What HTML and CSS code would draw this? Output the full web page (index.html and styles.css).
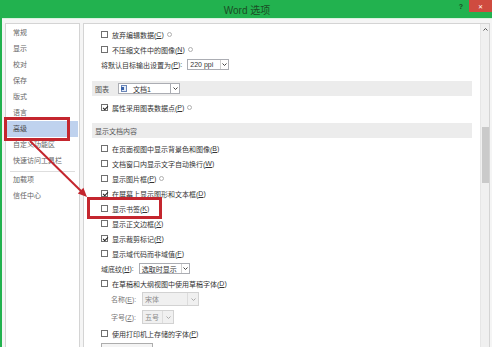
FILE: index.html
```html
<!DOCTYPE html>
<html lang="zh-CN">

<head>
  <meta charset="UTF-8" />
  <title>Word 选项</title>
  <link rel="stylesheet" href="styles.css">
</head>

<body>
  <div class="dialog">
    <div class="titlebar">
      <span></span>
      <span class="title">Word 选项</span>
      <div class="controls">
        <span class="help">?</span>
        <span class="close">✕</span>
      </div>
    </div>

    <div class="main">
      <ul class="nav">
        <li>常规</li>
        <li>显示</li>
        <li>校对</li>
        <li>保存</li>
        <li>版式</li>
        <li>语言</li>
        <li class="active">高级</li>
        <li>自定义功能区</li>
        <li>快速访问工具栏</li>
        <li class="sep"></li>
        <li>加载项</li>
        <li>信任中心</li>
      </ul>

      <div class="panel">
        <div class="options">
          <div class="row"><span class="cb"></span>放弃编辑数据(<u>C</u>)<span class="info"></span></div>
          <div class="row"><span class="cb"></span>不压缩文件中的图像(<u>N</u>)<span class="info"></span></div>
          <div class="row plain">将默认目标输出设置为(<u>P</u>):
            <span class="select ppi"><span class="val">220 ppi</span><span class="arr"><svg width="5" height="3" viewBox="0 0 5 3"><polyline points="0.5,0.5 2.5,2.5 4.5,0.5" fill="none" stroke="#444" /></svg></span></span>
          </div>

          <div class="band band-chart">图表
            <span class="select doc">
              <svg class="docicon" width="6" height="7" viewBox="0 0 6 7"><rect x="0.5" y="0.5" width="5" height="6" fill="#e3ebf6" stroke="#6b86b8" /><rect x="0" y="2" width="3" height="3" fill="#3a62a8" /></svg>
              <span class="val">文档1</span>
              <span class="arr boxed"><svg width="5" height="3" viewBox="0 0 5 3"><polyline points="0.5,0.5 2.5,2.5 4.5,0.5" fill="none" stroke="#444" /></svg></span>
            </span>
          </div>
          <div class="row after-chart"><span class="cb on"></span>属性采用图表数据点(<u>P</u>)<span class="info"></span></div>

          <div class="band band-doc">显示文档内容</div>
          <div class="row after-band"><span class="cb"></span>在页面视图中显示背景色和图像(<u>B</u>)</div>
          <div class="row"><span class="cb"></span>文档窗口内显示文字自动换行(<u>W</u>)</div>
          <div class="row"><span class="cb"></span>显示图片框(<u>P</u>)<span class="info"></span></div>
          <div class="row"><span class="cb on"></span>在屏幕上显示图形和文本框(<u>D</u>)</div>
          <div class="row"><span class="cb"></span>显示书签(<u>K</u>)</div>
          <div class="row"><span class="cb"></span>显示正文边框(<u>X</u>)</div>
          <div class="row"><span class="cb on"></span>显示裁剪标记(<u>R</u>)</div>
          <div class="row"><span class="cb"></span>显示域代码而非域值(<u>F</u>)</div>
          <div class="row plain">域底纹(<u>H</u>):
            <span class="select shading"><span class="val">选取时显示</span><span class="arr"><svg width="5" height="3" viewBox="0 0 5 3"><polyline points="0.5,0.5 2.5,2.5 4.5,0.5" fill="none" stroke="#444" /></svg></span></span>
          </div>
          <div class="row"><span class="cb"></span>在草稿和大纲视图中使用草稿字体(<u>D</u>)</div>
          <div class="row sub"><span class="lbl">名称(<u>E</u>):</span>
            <span class="select disabled font"><span class="val">宋体</span><span class="arr"><svg width="5" height="3" viewBox="0 0 5 3"><polyline points="0.5,0.5 2.5,2.5 4.5,0.5" fill="none" stroke="#aaa" /></svg></span></span>
          </div>
          <div class="row sub size-row"><span class="lbl">字号(<u>Z</u>):</span>
            <span class="select disabled size"><span class="val">五号</span><span class="arr"><svg width="5" height="3" viewBox="0 0 5 3"><polyline points="0.5,0.5 2.5,2.5 4.5,0.5" fill="none" stroke="#aaa" /></svg></span></span>
          </div>
          <div class="row printer"><span class="cb"></span>使用打印机上存储的字体(<u>P</u>)</div>
          <div class="btn"></div>
        </div>

        <div class="scrollbar">
          <span class="up"><svg width="5" height="3" viewBox="0 0 5 3"><polyline points="0.5,2.5 2.5,0.5 4.5,2.5" fill="none" stroke="#555" /></svg></span>
          <span class="thumb"></span>
        </div>
      </div>
    </div>

    <!-- 标注：红框和箭头 -->
    <svg class="annot" width="492" height="347" viewBox="0 0 492 347">
      <rect x="5.5" y="118.5" width="63" height="21" fill="none" stroke="#c4262e" stroke-width="3" />
      <rect x="88.5" y="198.5" width="72" height="19" fill="none" stroke="#c4262e" stroke-width="3" />
      <line x1="30" y1="141" x2="81" y2="191" stroke="#c4262e" stroke-width="2" />
      <polygon points="87,197 83.4,187.8 77.8,193.4" fill="#c4262e" />
    </svg>
  </div>
</body>

</html>
```

FILE: styles.css
```css
* {
  box-sizing: border-box;
}

body {
  margin: 0;
  font-family: "Liberation Sans", "Noto Sans CJK SC", sans-serif;
  font-size: 7px;
  color: #333;
  background: #fff;
}

.dialog {
  position: relative;
  width: 492px;
  height: 347px;
  overflow: hidden;
  display: flex;
  flex-direction: column;
  background: #f5f5f5;
  border-left: 2px solid #22b24f;
}

.titlebar {
  height: 18px;
  flex: none;
  background: #22b24f;
  color: #1b4d25;
  display: grid;
  grid-template-columns: 1fr auto 1fr;
  align-items: center;
}

.titlebar .title {
  font-size: 10px;
  color: #1b4d25;
  -webkit-text-fill-color: #1b4d25;
}

.controls {
  justify-self: end;
  align-self: start;
  display: flex;
}

.titlebar .help {
  font-size: 7px;
  font-weight: bold;
  color: #1b4d25;
  -webkit-text-fill-color: #1b4d25;
  line-height: 14px;
  margin-right: 6px;
}

.close {
  width: 23px;
  height: 12px;
  background: #cf4b3f;
  color: #fff;
  font-size: 6px;
  display: flex;
  align-items: center;
  justify-content: center;
}

.main {
  flex: 1;
  min-height: 0;
  display: flex;
  gap: 3px;
  padding: 4px 2px 0 3px;
  border-top: 1px solid #d9f1de;
}

/* 左侧导航 */
.nav {
  width: 75px;
  flex: none;
  margin: 0;
  padding: 1px 0 0;
  list-style: none;
  background: #fff;
  border: 1px solid #d4d4d4;
  border-bottom: none;
  color: #666;
}

.nav li {
  height: 16px;
  line-height: 16px;
  padding-left: 7px;
  white-space: nowrap;
}

.nav li.active {
  background: #bfd2ee;
  color: #4a4a4a;
  margin-right: 1px;
}

.nav li.sep {
  height: 1px;
  padding: 0;
  margin: 2px 4px 0;
  background: #dedede;
}

/* 右侧选项 */
.panel {
  flex: 1;
  display: flex;
  background: #fff;
  border: 1px solid #d4d4d4;
  border-bottom: none;
}

.options {
  flex: 1;
  padding-top: 3px;
}

.row {
  height: 15px;
  display: flex;
  align-items: center;
  padding-left: 17px;
  white-space: nowrap;
}

.cb {
  position: relative;
  flex: none;
  width: 7px;
  height: 7px;
  margin-right: 4px;
  border: 1px solid #707070;
  background: #fff;
}

.cb.on::after {
  content: "";
  position: absolute;
  left: 1.5px;
  top: -0.5px;
  width: 2px;
  height: 4px;
  border: solid #222;
  border-width: 0 1.3px 1.3px 0;
  transform: rotate(45deg);
}

.info {
  width: 5px;
  height: 5px;
  margin-left: 3px;
  border: 1px solid #b0b0b0;
  border-radius: 50%;
}

.band {
  height: 15px;
  margin: 0 8px;
  padding-left: 3px;
  display: flex;
  align-items: center;
  background: #ececec;
  color: #555;
}

.band-chart {
  margin-top: 9px;
}

.after-chart {
  margin-top: 4px;
}

.band-doc {
  margin-top: 8px;
}

.after-band {
  margin-top: 3px;
}

.select {
  display: inline-flex;
  align-items: center;
  height: 11px;
  padding-left: 2px;
  border: 1px solid #abadb3;
  background: #fff;
  color: #333;
}

.select .val {
  flex: 1;
}

.select .arr {
  width: 8px;
  height: 100%;
  display: flex;
  align-items: center;
  justify-content: center;
  border-left: 1px solid #d0d0d0;
}

.select .arr.boxed {
  width: 10px;
  border: 1px solid #abadb3;
  margin-right: -1px;
  height: 11px;
}

.ppi {
  width: 42px;
  margin-left: 5px;
}

.doc {
  width: 62px;
  margin-left: 9px;
}

.docicon {
  margin-right: 6px;
}

.shading {
  width: 51px;
  margin-left: 5px;
}

.sub {
  height: 16px;
  padding-left: 27px;
  color: #777;
}

.sub .lbl {
  width: 31px;
}

.size-row {
  margin-top: 2px;
}

.select.disabled {
  height: 14px;
  background: #f0f0f0;
  border-color: #d2d2d2;
  color: #8a8a8a;
}

.select.disabled .arr {
  width: 11px;
  border-left-color: #dcdcdc;
}

.font {
  width: 57px;
}

.size {
  width: 32px;
}

.printer {
  margin-top: 1px;
}

.btn {
  width: 52px;
  height: 14px;
  margin: 2px 0 0 17px;
  border: 1px solid #adadad;
  background: #f4f4f4;
}

.scrollbar {
  width: 9px;
  flex: none;
  display: flex;
  flex-direction: column;
  align-items: center;
  background: #f0f0f0;
  border-left: 1px solid #e6e6e6;
}

.up {
  height: 10px;
  display: flex;
  align-items: center;
}

.thumb {
  width: 7px;
  height: 56px;
  margin-top: 93px;
  background: #cacaca;
}

.annot {
  position: absolute;
  left: -2px;
  top: 0;
  pointer-events: none;
}
```
